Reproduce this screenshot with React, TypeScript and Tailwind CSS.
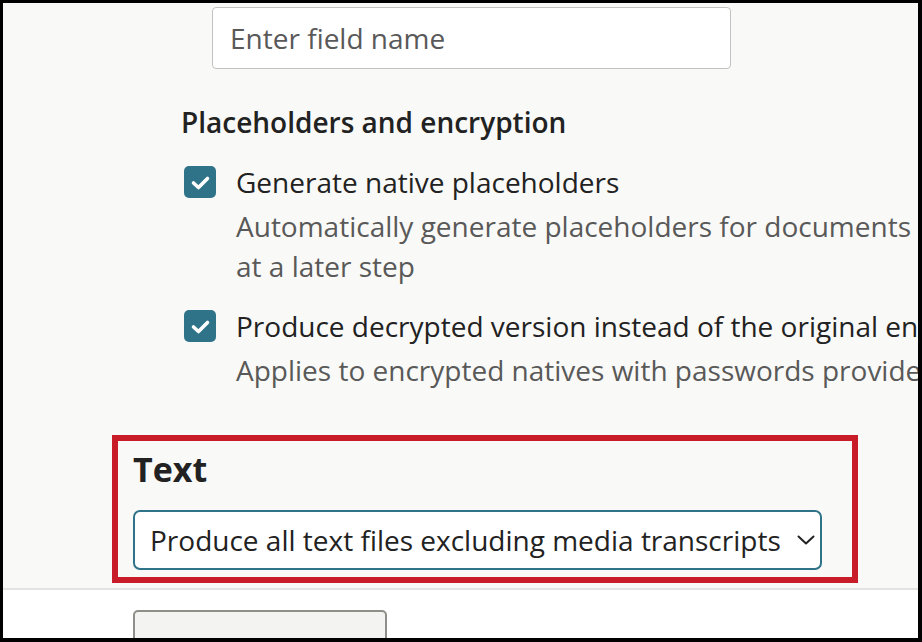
function CheckBox() {
  return (
    <span className="flex h-[32px] w-[32px] shrink-0 items-center justify-center rounded-[5px] bg-[#2f7388]">
      <svg width="32" height="32" viewBox="0 0 32 32" fill="none">
        <path d="M9.5 17l5 4.5L23.5 12.5" stroke="white" strokeWidth="3.6" strokeLinecap="round" strokeLinejoin="round" />
      </svg>
    </span>
  )
}

type OptionProps = {
  label: string
  lines: string[]
  className?: string
}

function Option({ label, lines, className = '' }: OptionProps) {
  return (
    <div className={`flex ${className}`}>
      <div className="ml-[181px] flex h-[40px] items-center">
        <CheckBox />
      </div>
      <div className="ml-[20px] whitespace-nowrap">
        <p className="text-[28px] leading-[40px] text-[#222]">{label}</p>
        <div className="mt-1 text-[28px] leading-[40px] text-[#595959]">
          {lines.map((l) => (
            <p key={l}>{l}</p>
          ))}
        </div>
      </div>
    </div>
  )
}

export default function App() {
  return (
    <div className="h-[642px] w-[922px] overflow-hidden border-[3px] border-r-4 border-b-4 border-black bg-white font-['Open_Sans',sans-serif]">
      <div className="bg-[#f9f9f7] pt-[4px] pb-[5px]">
        <input
          type="text"
          placeholder="Enter field name"
          className="ml-[209px] block h-[62px] w-[519px] rounded-[4px] border border-[#c2c2c0] bg-white px-[17px] text-[28px] text-[#222] outline-none placeholder:text-[#595959]"
        />

        <h2 className="mt-[37px] pl-[178px] text-[28px] leading-[32px] font-semibold text-[#222]">
          Placeholders and encryption
        </h2>

        <Option
          className="mt-[24px]"
          label="Generate native placeholders"
          lines={['Automatically generate placeholders for documents that', 'at a later step']}
        />
        <Option
          className="mt-[20px]"
          label="Produce decrypted version instead of the original encrypted"
          lines={['Applies to encrypted natives with passwords provided']}
        />

        {/* highlighted section */}
        <div className="mt-[45px] ml-[109px] w-[746px] border-[6px] border-[#c81d29] pt-[8px] pr-[30px] pb-[7px] pl-[15px]">
          <h3 className="text-[34px] leading-[40px] font-bold text-[#222]">Text</h3>
          <div className="mt-[21px] flex h-[60px] items-center justify-between rounded-[7px] border-2 border-[#2f7388] bg-white pr-[5px] pl-[15px]">
            <span className="text-[28px] whitespace-nowrap text-[#222]">Produce all text files excluding media transcripts</span>
            <svg width="18" height="10" viewBox="0 0 18 10" fill="none">
              <path d="M1.5 1.5L9 8.5L16.5 1.5" stroke="#222" strokeWidth="2" strokeLinecap="round" strokeLinejoin="round" />
            </svg>
          </div>
        </div>
      </div>

      <div className="border-t-2 border-[#e3e3e1] bg-white pt-[20px] pl-[130px]">
        <button className="h-[60px] w-[254px] rounded-[5px] border-2 border-[#8f8f8a] bg-[#f3f3f1]" />
      </div>
    </div>
  )
}
